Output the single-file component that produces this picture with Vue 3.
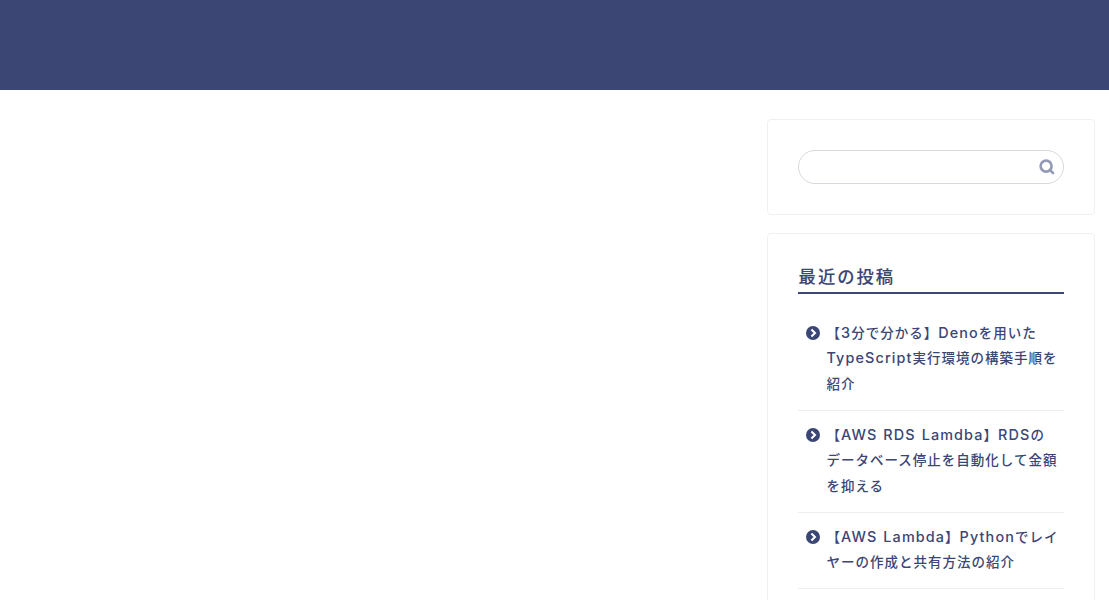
<script setup>
const posts = [
  ['【3分で分かる】Denoを用いた', 'TypeScript実行環境の構築手順を', '紹介'],
  ['【AWS RDS Lamdba】RDSの', 'データベース停止を自動化して金額', 'を抑える'],
  ['【AWS Lambda】Pythonでレイ', 'ヤーの作成と共有方法の紹介'],
]
// Splits a line into Latin and Japanese runs so each can have its own tracking.
const runs = (line) => line.match(/[A-Za-z0-9 ]+|[^A-Za-z0-9 ]+/g).map((text) => ({ text, latin: /[A-Za-z0-9]/.test(text) }))
</script>

<template>
  <div class="page">
    <header class="header"></header>
    <aside class="sidebar">
      <section class="card search-card">
        <form class="search" @submit.prevent>
          <input class="field" type="text" aria-label="Search" />
          <svg class="glass" viewBox="0 0 16 16"><circle cx="7.1" cy="7.1" r="5.5" /><path d="M11 11l3.1 3.1" /></svg>
        </form>
      </section>
      <section class="card posts-card">
        <h2 class="title">最近の投稿</h2>
        <ul class="list">
          <li v-for="(post, i) in posts" :key="i" class="item">
            <svg class="bullet" viewBox="0 0 14 14"><circle cx="7" cy="7" r="7" /><path d="M5.4 3.4L9 7L5.4 10.6" /></svg>
            <a class="link"><span v-for="line in post" :key="line" class="line"><span v-for="(run, j) in runs(line)" :key="j" :class="{ latin: run.latin }">{{ run.text }}</span></span></a>
          </li>
        </ul>
      </section>
    </aside>
  </div>
</template>

<style>
body { margin: 0; overflow: hidden; }
</style>

<style scoped>
.page { height: 600px; overflow: hidden; background: #fff; color: #3b4675; font-family: "Noto Sans CJK JP", sans-serif; }
.header { height: 90px; background: #3b4675; }
.sidebar { width: 328px; margin: 29px 14px 0 auto; display: flex; flex-direction: column; gap: 18px; }
.card { box-sizing: border-box; border: 1px solid #f0f0f0; border-radius: 4px; padding: 30px; }
.search-card { height: 96px; }
.search { display: flex; align-items: center; box-sizing: border-box; height: 34px; border: 1px solid #d8d8df; border-radius: 17px; padding: 0 8px 0 14px; }
.field { flex: 1; min-width: 0; border: 0; outline: 0; background: transparent; }
.glass { width: 16px; height: 16px; fill: none; stroke: #9499b5; stroke-width: 2.6; stroke-linecap: round; }
.posts-card { height: 420px; }
.title { box-sizing: border-box; height: 30px; margin: 0; padding-left: 0.6px; border-bottom: 2px solid #3b4675; font-size: 17.3px; line-height: 23px; font-weight: 500; letter-spacing: 2px; -webkit-text-stroke: 0.1px #3b4675; }
.list { margin: 15px 0 0; padding: 0; list-style: none; }
.item { display: flex; padding: 11.1px 0 13.6px 8px; border-bottom: 1px solid #eee; }
.bullet { width: 14px; height: 14px; flex: none; margin: 6.2px 6.5px 0 0; fill: #3b4675; }
.bullet path { fill: none; stroke: #fff; stroke-width: 2.1; }
.link { font-size: 13.5px; line-height: 25.4px; font-weight: 500; letter-spacing: 1px; }
.line { display: block; height: 25.4px; white-space: pre; }
.latin { font-family: Inter, sans-serif; font-size: 14.4px; line-height: 1; letter-spacing: 1.12px; word-spacing: 1px; }
</style>
